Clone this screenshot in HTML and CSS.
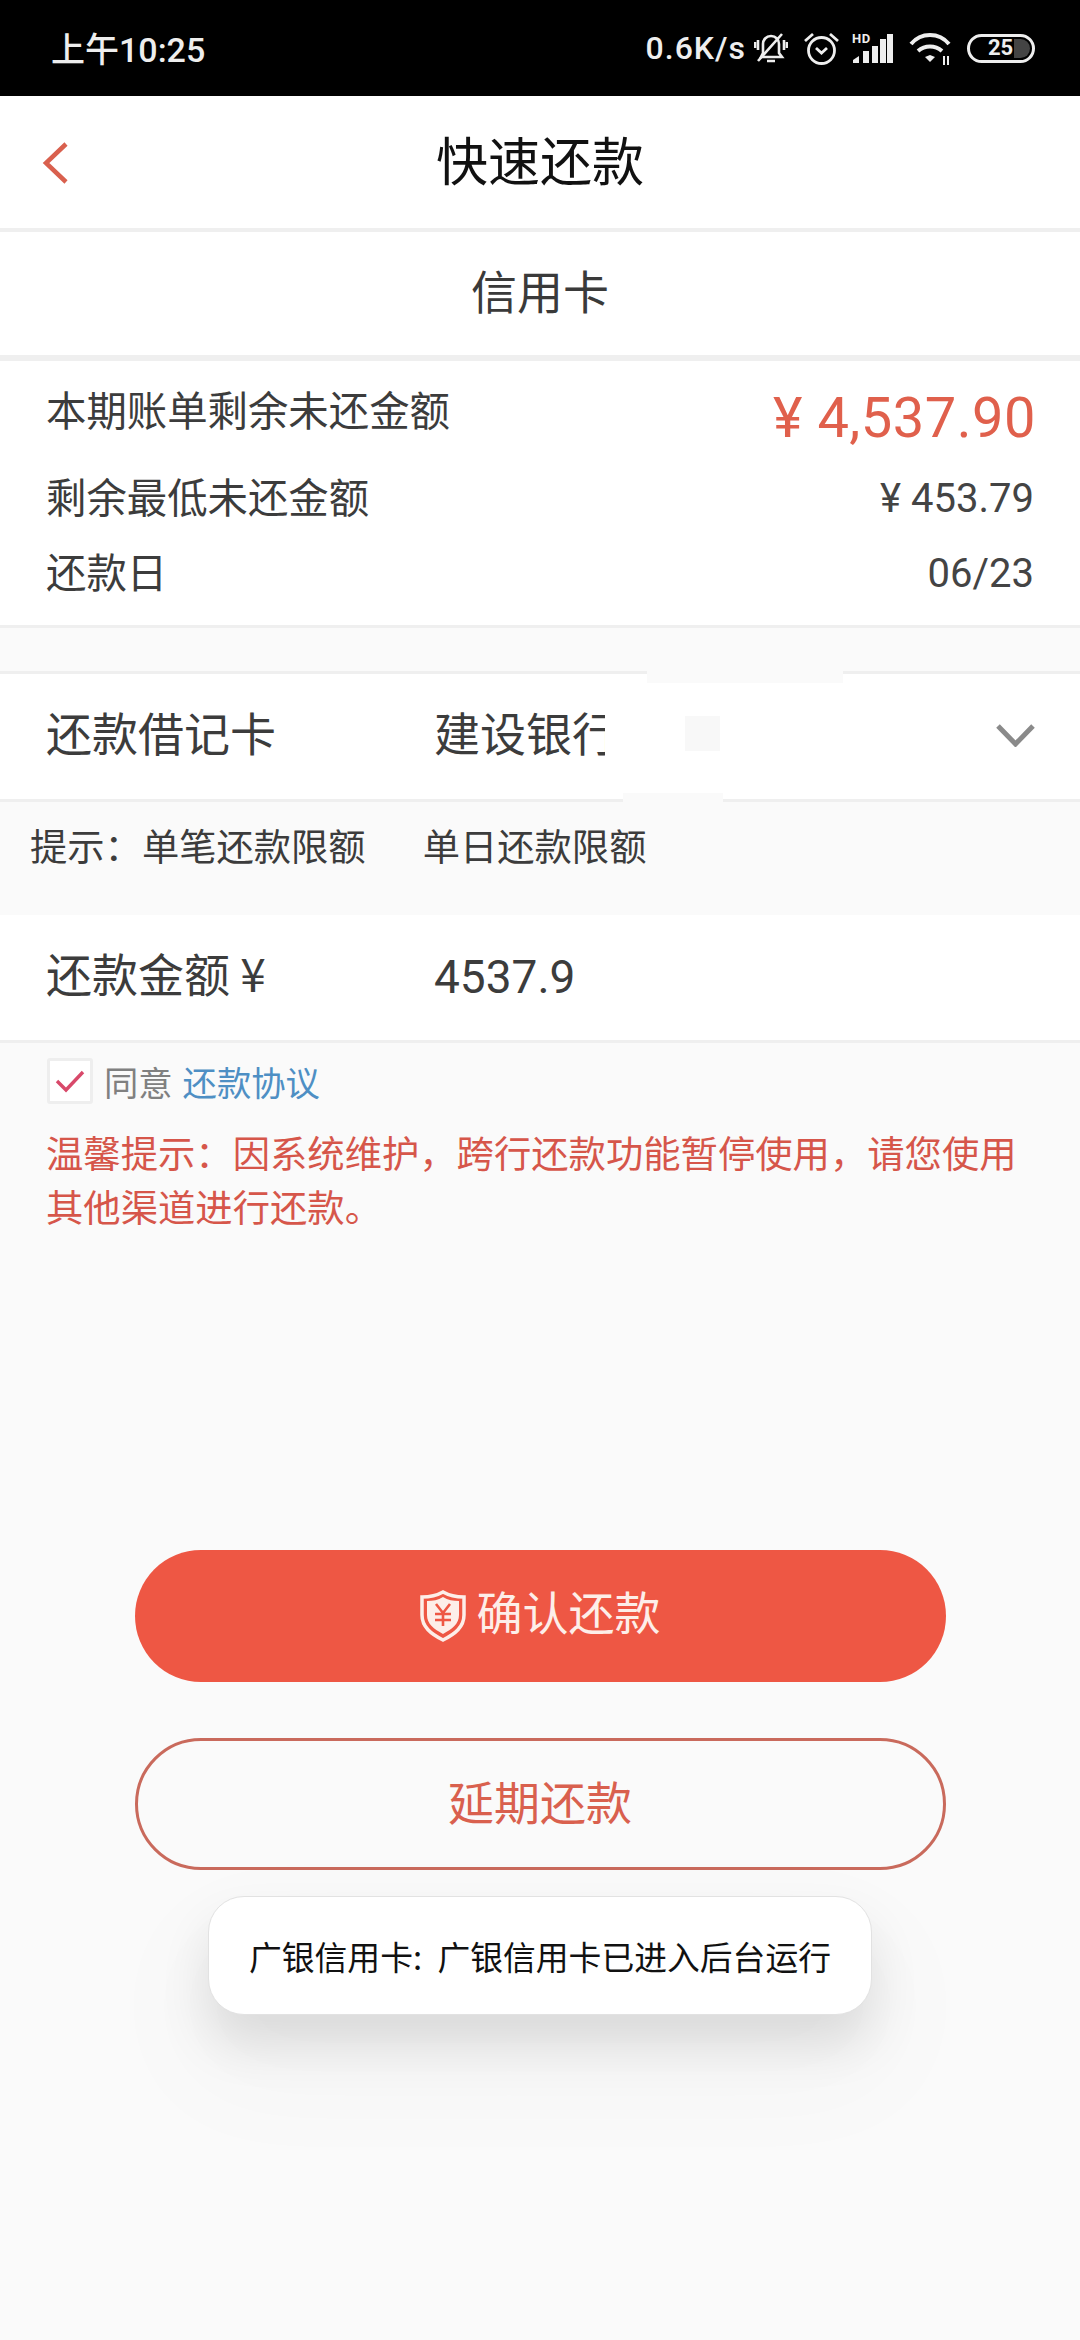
FILE: index.html
```html
<!DOCTYPE html>
<html lang="zh-CN">
<head>
<meta charset="utf-8">
<title>快速还款</title>
<link rel="stylesheet" href="styles.css">
</head>
<body>
<div class="page">
  <header class="status">
    <span class="time">上午10:25</span>
    <div class="status-right">
      <span class="speed">0.6K/s</span>
      <svg class="ic-bell" width="34" height="32" viewBox="0 0 34 32" fill="none" stroke="#eee" stroke-width="2.6"><path d="M7 25h21l-3-4v-9c0-4-3-8-8-8s-8 4-8 8v9z"/><path d="M13 29h8M4 29 28 2M1 10v6M4 8v10M30 8v10M33 10v6"/></svg>
      <svg class="ic-alarm" width="35" height="33" viewBox="0 0 35 33" fill="none" stroke="#eee" stroke-width="2.8"><circle cx="17.5" cy="18.5" r="13"/><path d="m12 16 5.500 5 5.500-5M1 9l8-7M34 9l-8-7"/></svg>
      <div class="signal">
        <span class="hd">HD</span>
        <svg width="41" height="30" viewBox="0 0 41 30" fill="#eee"><path d="M1 30v-3l6-4v7zM11 30V18h6v12zM20 30V13h6v17zM28 30V6h6v24zM35 30V1h6v29z"/></svg>
      </div>
      <svg class="ic-wifi" width="42" height="33" viewBox="0 0 42 33" fill="none" stroke="#eee" stroke-width="4"><path d="M2 12C12 0 30 0 40 12M9 19c7-6 17-6 24 0"/><path d="m16 25 5-2 5 2-5 5z" fill="#eee" stroke="none"/><path d="M35 24v9M39 24v9" stroke-width="2"/></svg>
      <div class="battery"><span class="batt-num">25</span><span class="batt-fill"></span></div>
    </div>
  </header>

  <nav class="nav">
    <svg class="back" width="28" height="44" viewBox="0 0 28 44" fill="none" stroke="#d9604e" stroke-width="4.500"><path d="M25 3 5 22l20 19"/></svg>
    <h1 class="nav-title">快速还款</h1>
  </nav>

  <div class="tab">信用卡</div>

  <section class="bill">
    <div class="bill-row bill-first"><span>本期账单剩余未还金额</span><span class="big-amt">¥ 4,537.90</span></div>
    <div class="bill-row bill-second"><span>剩余最低未还金额</span><span class="num">¥ 453.79</span></div>
    <div class="bill-row bill-third"><span>还款日</span><span class="num">06/23</span></div>
  </section>

  <section class="field card-field">
    <span class="field-label">还款借记卡</span>
    <span class="field-value">建设银行</span>
    <div class="redact"><span class="redact-dot"></span></div>
    <span class="patch patch-top"></span>
    <span class="patch patch-bottom"></span>
    <svg class="chev" width="39" height="24" viewBox="0 0 39 24" fill="none" stroke="#8a8a8a" stroke-width="5"><path d="m2 3 17.500 18L37 3"/></svg>
  </section>

  <div class="hint"><span>提示：单笔还款限额</span><span>单日还款限额</span></div>

  <section class="field amount-field">
    <span class="field-label">还款金额 ¥</span>
    <span class="field-value amount">4537.9</span>
  </section>

  <div class="agree">
    <span class="check"><svg width="30" height="24" viewBox="0 0 30 24" fill="none" stroke="#d8496a" stroke-width="3.400"><path d="m2 12 9 9L28 3"/></svg></span>
    <span class="agree-text">同意</span>
    <span class="agree-link">还款协议</span>
  </div>

  <p class="notice">温馨提示：因系统维护，跨行还款功能暂停使用，请您使用其他渠道进行还款。</p>

  <div class="actions">
    <button class="btn btn-primary">
      <svg width="46" height="52" viewBox="0 0 46 52" fill="none"><path d="M23 2c7 4 13 5 21 5v18c0 12-9 19-21 25C11 44 2 37 2 25V7c8 0 14-1 21-5z" stroke="#fdeee9" stroke-width="3.500" fill="#ee5744"/><path d="M7 11c6 0 11-1 16-4 5 3 10 4 16 4v14c0 9-7 14-16 19C14 39 7 34 7 25z" fill="#fdeee9"/><path d="m16 14 7 9 7-9M23 23v13M15 24h16M15 30h16" stroke="#ee5744" stroke-width="2.600"/></svg>
      <span class="btn-label label-strong">确认还款</span>
    </button>
    <button class="btn btn-outline"><span class="btn-label">延期还款</span></button>
  </div>

  <div class="toast">广银信用卡: 广银信用卡已进入后台运行</div>
</div>
</body>
</html>
```
FILE: styles.css
```css
* { box-sizing: border-box; }
html, body { margin: 0; padding: 0; }
body { font-family: "Noto Sans CJK SC", Roboto, sans-serif; background: #fafafa; }
.page { position: relative; width: 1080px; height: 2340px; background: #fafafa; overflow: hidden; display: flex; flex-direction: column; color: #3c3c3c; }

.status { height: 96px; background: #000; color: #eee; display: flex; align-items: center; justify-content: space-between; padding: 0 45px 0 51px; flex: none; }
.time { font-family: Roboto, "Noto Sans CJK SC", sans-serif; font-size: 34px; font-weight: 500; position: relative; top: -1px; }
.status-right { display: flex; align-items: center; gap: 16px; }
.speed { font-family: Roboto, sans-serif; font-size: 32px; font-weight: 500; letter-spacing: 1px; margin-right: -8px; }
.signal { position: relative; width: 41px; height: 30px; margin-left: -3px; }
.signal svg { display: block; }
.hd { position: absolute; left: 0; top: 0; font-family: Roboto, sans-serif; font-size: 13px; line-height: 11px; font-weight: 700; color: #eee; letter-spacing: .5px; }
.battery { position: relative; width: 68px; height: 29px; border: 3px solid #eee; border-radius: 15px; display: flex; align-items: center; overflow: hidden; padding-left: 18px; }
.batt-num { font-family: Roboto, sans-serif; font-weight: 700; font-size: 22px; line-height: 1; }
.batt-fill { position: absolute; right: 2px; top: 2px; bottom: 2px; width: 16px; background: #444; border-radius: 0 10px 10px 0; }

.nav { height: 136px; background: #fff; border-bottom: 4px solid #efefef; display: flex; align-items: center; justify-content: center; position: relative; flex: none; padding-bottom: 7px; }
.back { position: absolute; left: 41px; top: 45px; }
.nav-title { margin: 0; font-size: 52px; font-weight: 400; color: #111; }

.tab { height: 129px; background: #fff; border-bottom: 6px solid #efefef; display: flex; align-items: center; justify-content: center; font-size: 46px; color: #3a3a3a; flex: none; padding-bottom: 9px; }

.bill { height: 267px; background: #fff; border-bottom: 3px solid #efefef; padding: 0 46px; flex: none; font-size: 40.400px; }
.bill-row { display: flex; justify-content: space-between; align-items: center; }
.bill-first { height: 94px; }
.bill-second { height: 80px; }
.bill-third { height: 70px; }
.big-amt { font-family: Roboto, sans-serif; font-size: 56px; color: #e0604c; letter-spacing: .5px; padding-top: 20px; margin-right: -2px; }
.num { font-family: Roboto, sans-serif; font-size: 40px; color: #444; padding-top: 6px; }

.field { background: #fff; display: flex; align-items: center; padding-left: 46px; position: relative; flex: none; font-size: 46px; }
.field-label { width: 388px; flex: none; }
.card-field { margin-top: 43px; height: 131px; border-top: 3px solid #efefef; border-bottom: 3px solid #efefef; padding-bottom: 11px; }
.redact { position: absolute; left: 605px; top: 9px; width: 264px; height: 110px; background: #fff; display: flex; align-items: center; padding-left: 80px; padding-bottom: 10px; }
.redact-dot { width: 35px; height: 35px; background: #f8f8f8; }
.patch { position: absolute; background: #fafafa; }
.patch-top { left: 647px; top: -3px; width: 196px; height: 12px; }
.patch-bottom { left: 623px; top: 119px; width: 100px; height: 12px; }
.chev { position: absolute; right: 45px; top: 49px; }

.hint { height: 113px; padding: 0 30px 27px; display: flex; align-items: center; gap: 57px; font-size: 37.300px; flex: none; }
.amount-field { height: 128px; border-bottom: 3px solid #efefef; padding-bottom: 12px; }
.amount { font-family: Roboto, sans-serif; font-size: 46px; padding-top: 10px; }

.agree { display: flex; align-items: center; padding: 15px 0 0 47px; font-size: 34.300px; flex: none; height: 61px; }
.check { width: 46px; height: 46px; background: #fff; border: 3px solid #eee; border-radius: 3px; display: flex; align-items: center; justify-content: center; margin-right: 11px; }
.agree-text { color: #808080; }
.agree-link { color: #4e8fc4; margin-left: 10px; }
.notice { margin: 21px 0 0; padding: 0 46px; font-size: 37.330px; line-height: 54px; color: #d6564a; flex: none; }

.actions { margin-top: 317px; display: flex; flex-direction: column; align-items: center; gap: 56px; flex: none; }
.btn { width: 811px; height: 132px; border-radius: 66px; font-family: inherit; font-size: 46px; display: flex; align-items: center; justify-content: center; gap: 11px; padding: 0; }
.btn-label { padding-bottom: 8px; }
.label-strong { padding-bottom: 13px; }
.btn-primary { background: #ee5744; color: #fdeee9; border: none; }
.btn-outline { background: transparent; color: #d9604e; border: 3px solid #c96a5c; }

.toast { position: absolute; left: 208px; top: 1896px; width: 664px; height: 119px; background: #fff; border: 1px solid #e2e2e2; border-radius: 36px; display: flex; align-items: center; justify-content: center; font-size: 32.800px; word-spacing: 8px; color: #111; box-shadow: 0 30px 50px rgba(0,0,0,.11), 0 50px 110px 30px rgba(0,0,0,.025); }
```
